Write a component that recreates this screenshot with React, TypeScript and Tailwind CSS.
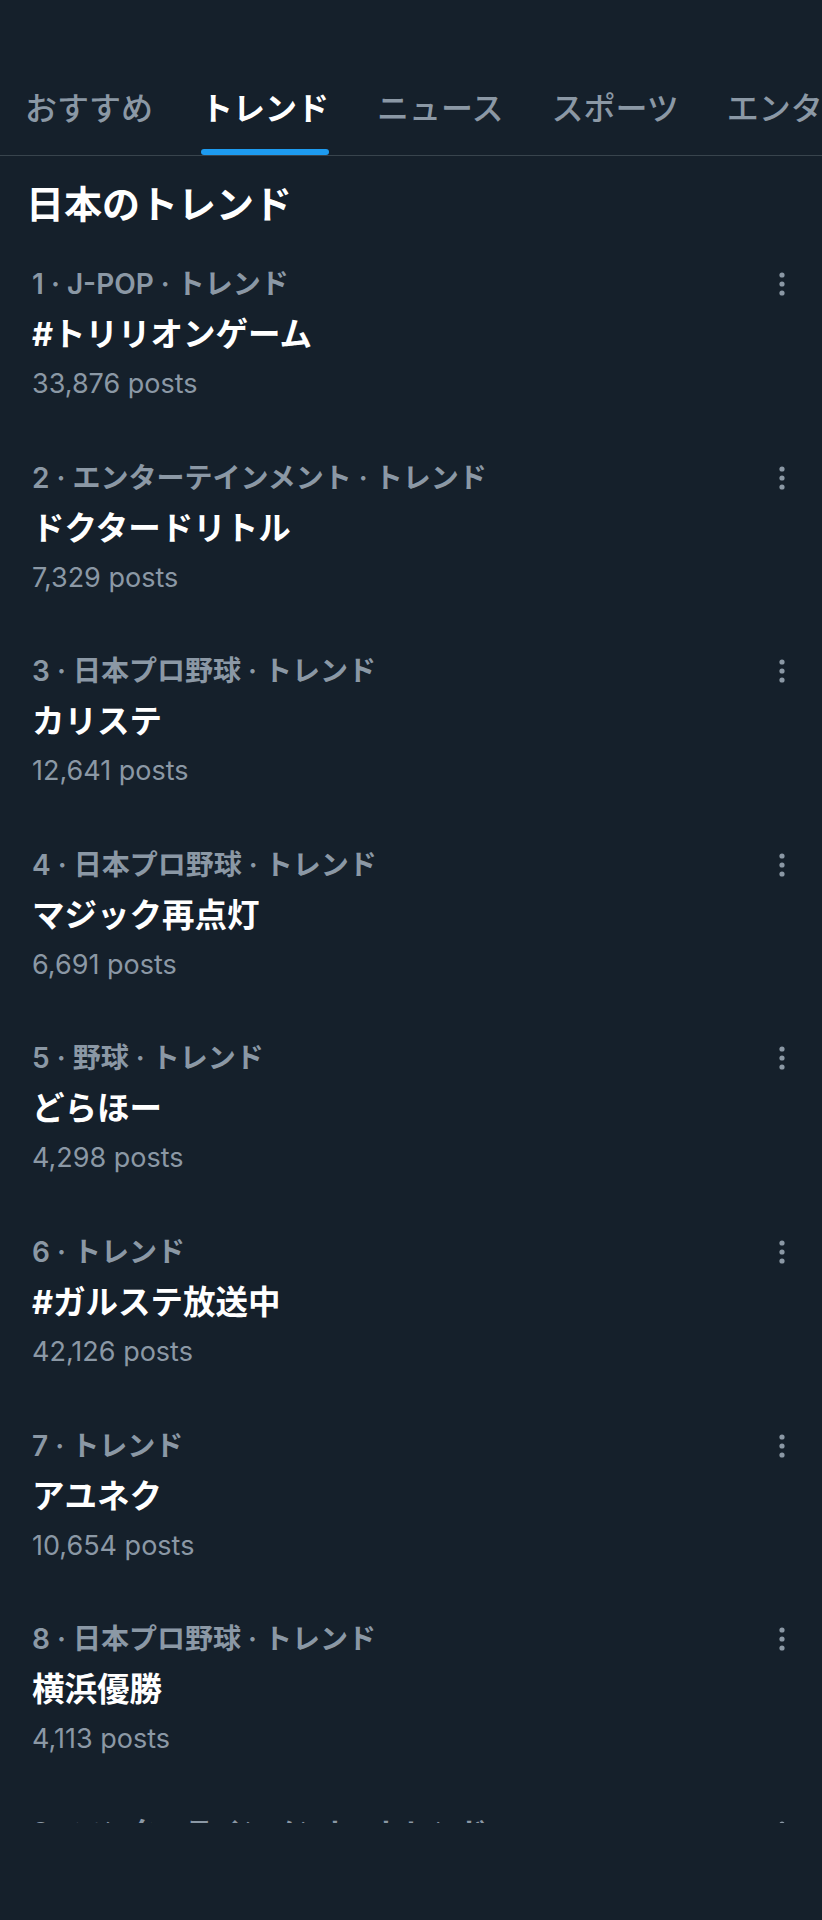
import React from 'react';

const tabs = ['おすすめ', 'トレンド', 'ニュース', 'スポーツ', 'エンターテイメント'];

const trends = [
  { id: 1, meta: 'J-POP · トレンド', title: '#トリリオンゲーム', posts: '33,876 posts' },
  { id: 2, meta: 'エンターテインメント · トレンド', title: 'ドクタードリトル', posts: '7,329 posts' },
  { id: 3, meta: '日本プロ野球 · トレンド', title: 'カリステ', posts: '12,641 posts' },
  { id: 4, meta: '日本プロ野球 · トレンド', title: 'マジック再点灯', posts: '6,691 posts' },
  { id: 5, meta: '野球 · トレンド', title: 'どらほー', posts: '4,298 posts' },
  { id: 6, meta: 'トレンド', title: '#ガルステ放送中', posts: '42,126 posts' },
  { id: 7, meta: 'トレンド', title: 'アユネク', posts: '10,654 posts' },
  { id: 8, meta: '日本プロ野球 · トレンド', title: '横浜優勝', posts: '4,113 posts' },
  { id: 9, meta: 'エンターテインメント · トレンド', title: 'トレンド', posts: '3,021 posts' },
];

const font = { fontFamily: 'Inter, "Noto Sans CJK JP", sans-serif' };

const MoreIcon: React.FC = () => (
  <svg width="10" height="26" viewBox="0 0 10 26" className="text-[#8b98a5]" fill="currentColor">
    <circle cx="5" cy="4" r="2.6" />
    <circle cx="5" cy="13" r="2.6" />
    <circle cx="5" cy="22" r="2.6" />
  </svg>
);

const App: React.FC = () => {
  return (
    <div className="w-[822px] h-[1920px] bg-[#15202b] flex flex-col overflow-hidden" style={font}>
      {/* status bar space */}
      <div className="h-[62px]" />

      {/* Tabs */}
      <div className="h-[94px] border-b border-[#38444d] flex pl-[25px] gap-[48px] whitespace-nowrap overflow-hidden">
        {tabs.map((t, i) => (
          <div key={t} className="relative h-full flex items-center shrink-0">
            <span className={`text-[32px] leading-none ${i === 1 ? 'text-white font-bold' : 'text-[#8b98a5] font-medium'}`}>
              {t}
            </span>
            {i === 1 && <div className="absolute left-0 right-0 bottom-[0px] h-[6px] rounded-full bg-[#1d9bf0]" />}
          </div>
        ))}
      </div>

      {/* Heading */}
      <div className="pt-[24px] pb-[17px] px-[26px]">
        <h1 className="text-[38px] leading-[48px] font-bold text-white">日本のトレンド</h1>
      </div>

      {/* Trend list */}
      <div className="h-[1578px] overflow-hidden">
        {trends.map((t) => (
          <div key={t.id} className="h-[193.6px] pt-[22px] pl-[32px] pr-[35px]">
            <div className="flex items-center justify-between h-[34px]">
              <span className="text-[28px] leading-[34px] font-semibold text-[#8b98a5] whitespace-nowrap">
                {t.id} · {t.meta}
              </span>
              <MoreIcon />
            </div>
            <div className="mt-[14px] text-[32.5px] leading-[40px] font-bold text-white">{t.title}</div>
            <div className="mt-[12px] text-[27px] leading-[34px] text-[#8b98a5]">{t.posts}</div>
          </div>
        ))}
      </div>

      <div className="flex-1" />
    </div>
  );
};

export default App;
